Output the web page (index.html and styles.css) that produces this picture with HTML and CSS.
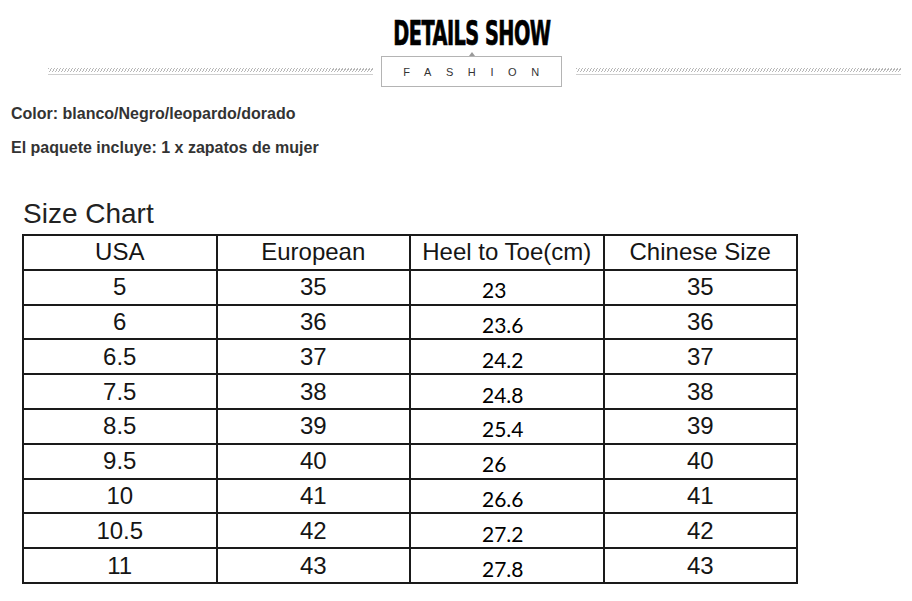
FILE: index.html
```html
<!DOCTYPE html>
<html lang="es">
<head>
<meta charset="utf-8">
<title>Details Show</title>
<link rel="stylesheet" href="styles.css">
</head>
<body>
<div class="page">
  <header class="hero">
    <h1 class="hero-title"><span>DETAILS SHOW</span></h1>
  </header>
  <div class="hero-rule">
    <span class="hatch hatch-left"></span>
    <div class="tag">FASHION</div>
    <span class="hatch hatch-right"></span>
  </div>
  <div class="info">
    <p class="info-line">Color: blanco/Negro/leopardo/dorado</p>
    <p class="info-line">El paquete incluye: 1 x zapatos de mujer</p>
  </div>
  <h2 class="chart-title">Size Chart</h2>
  <table class="chart">
    <colgroup><col><col><col><col></colgroup>
    <thead>
      <tr><th>USA</th><th>European</th><th>Heel to Toe(cm)</th><th>Chinese Size</th></tr>
    </thead>
    <tbody>
      <tr><td>5</td><td>35</td><td class="cm">23</td><td>35</td></tr>
      <tr><td>6</td><td>36</td><td class="cm">23.6</td><td>36</td></tr>
      <tr><td>6.5</td><td>37</td><td class="cm">24.2</td><td>37</td></tr>
      <tr><td>7.5</td><td>38</td><td class="cm">24.8</td><td>38</td></tr>
      <tr><td>8.5</td><td>39</td><td class="cm">25.4</td><td>39</td></tr>
      <tr><td>9.5</td><td>40</td><td class="cm">26</td><td>40</td></tr>
      <tr><td>10</td><td>41</td><td class="cm">26.6</td><td>41</td></tr>
      <tr><td>10.5</td><td>42</td><td class="cm">27.2</td><td>42</td></tr>
      <tr><td>11</td><td>43</td><td class="cm">27.8</td><td>43</td></tr>
    </tbody>
  </table>
</div>
</body>
</html>
```
FILE: styles.css
```css
* { box-sizing: border-box; }

html, body {
  margin: 0;
  padding: 0;
  background: #ffffff;
}

body {
  font-family: "Liberation Sans", Arial, sans-serif;
  color: #111;
}

.page {
  width: 912px;
  height: 601px;
  overflow: hidden;
  padding-top: 18px;
}

.hero {
  display: flex;
  justify-content: center;
  padding-left: 32px;
}

.hero-title {
  margin: 0;
  height: 32px;
  line-height: 32px;
  font-family: "DejaVu Sans Condensed", "DejaVu Sans", sans-serif;
  font-weight: bold;
  font-size: 33px;
  color: #000;
  letter-spacing: -0.8px;
  -webkit-text-stroke: 0.7px #000;
}

.hero-title span {
  display: inline-block;
  transform: scaleX(0.65);
}

.hero-rule {
  display: flex;
  align-items: center;
  margin-top: 6px;
  padding-left: 48px;
}

.hatch {
  display: block;
  width: 325px;
  height: 7px;
  background:
    repeating-linear-gradient(120deg, #b8b8b8 0 1px, transparent 1px 2.6px) top / 100% 4px no-repeat,
    linear-gradient(#cfcfcf, #cfcfcf) bottom / 100% 1px no-repeat;
}

.hatch-left { margin-right: 8px; }
.hatch-right { margin-left: 14px; }

.tag {
  position: relative;
  width: 181px;
  height: 31px;
  border: 1.5px solid #b4b4b4;
  display: flex;
  align-items: center;
  justify-content: center;
  padding-left: 14px;
  font-size: 11px;
  letter-spacing: 14.6px;
  color: #333;
}

.tag::before {
  content: "";
  position: absolute;
  top: -5.5px;
  left: 50%;
  margin-left: -3px;
  border-left: 3px solid transparent;
  border-right: 3px solid transparent;
  border-bottom: 4px solid #9a9a9a;
}

.info {
  display: flex;
  flex-direction: column;
  gap: 14px;
  padding: 17px 0 0 11px;
}

.info-line {
  margin: 0;
  font-size: 16px;
  line-height: 20px;
  font-weight: bold;
  color: #333;
}

.chart-title {
  margin: 40px 0 0 23px;
  font-size: 28px;
  line-height: 32px;
  font-weight: normal;
  color: #222;
}

.chart {
  margin: 4px 0 0 22px;
  width: 776px;
  border-collapse: collapse;
  table-layout: fixed;
}

.chart tr {
  height: 34.8px;
}

.chart th,
.chart td {
  border: 2px solid #1a1a1a;
  padding: 0;
  text-align: center;
  vertical-align: middle;
  font-family: "Liberation Sans", Arial, sans-serif;
  font-size: 24px;
  font-weight: normal;
  line-height: 24px;
  color: #151515;
}

.chart td.cm {
  text-align: left;
  padding: 6px 0 0 71px;
  font-family: Lato, "Open Sans", sans-serif;
  font-size: 21px;
  line-height: 20px;
  color: #000;
}
```
